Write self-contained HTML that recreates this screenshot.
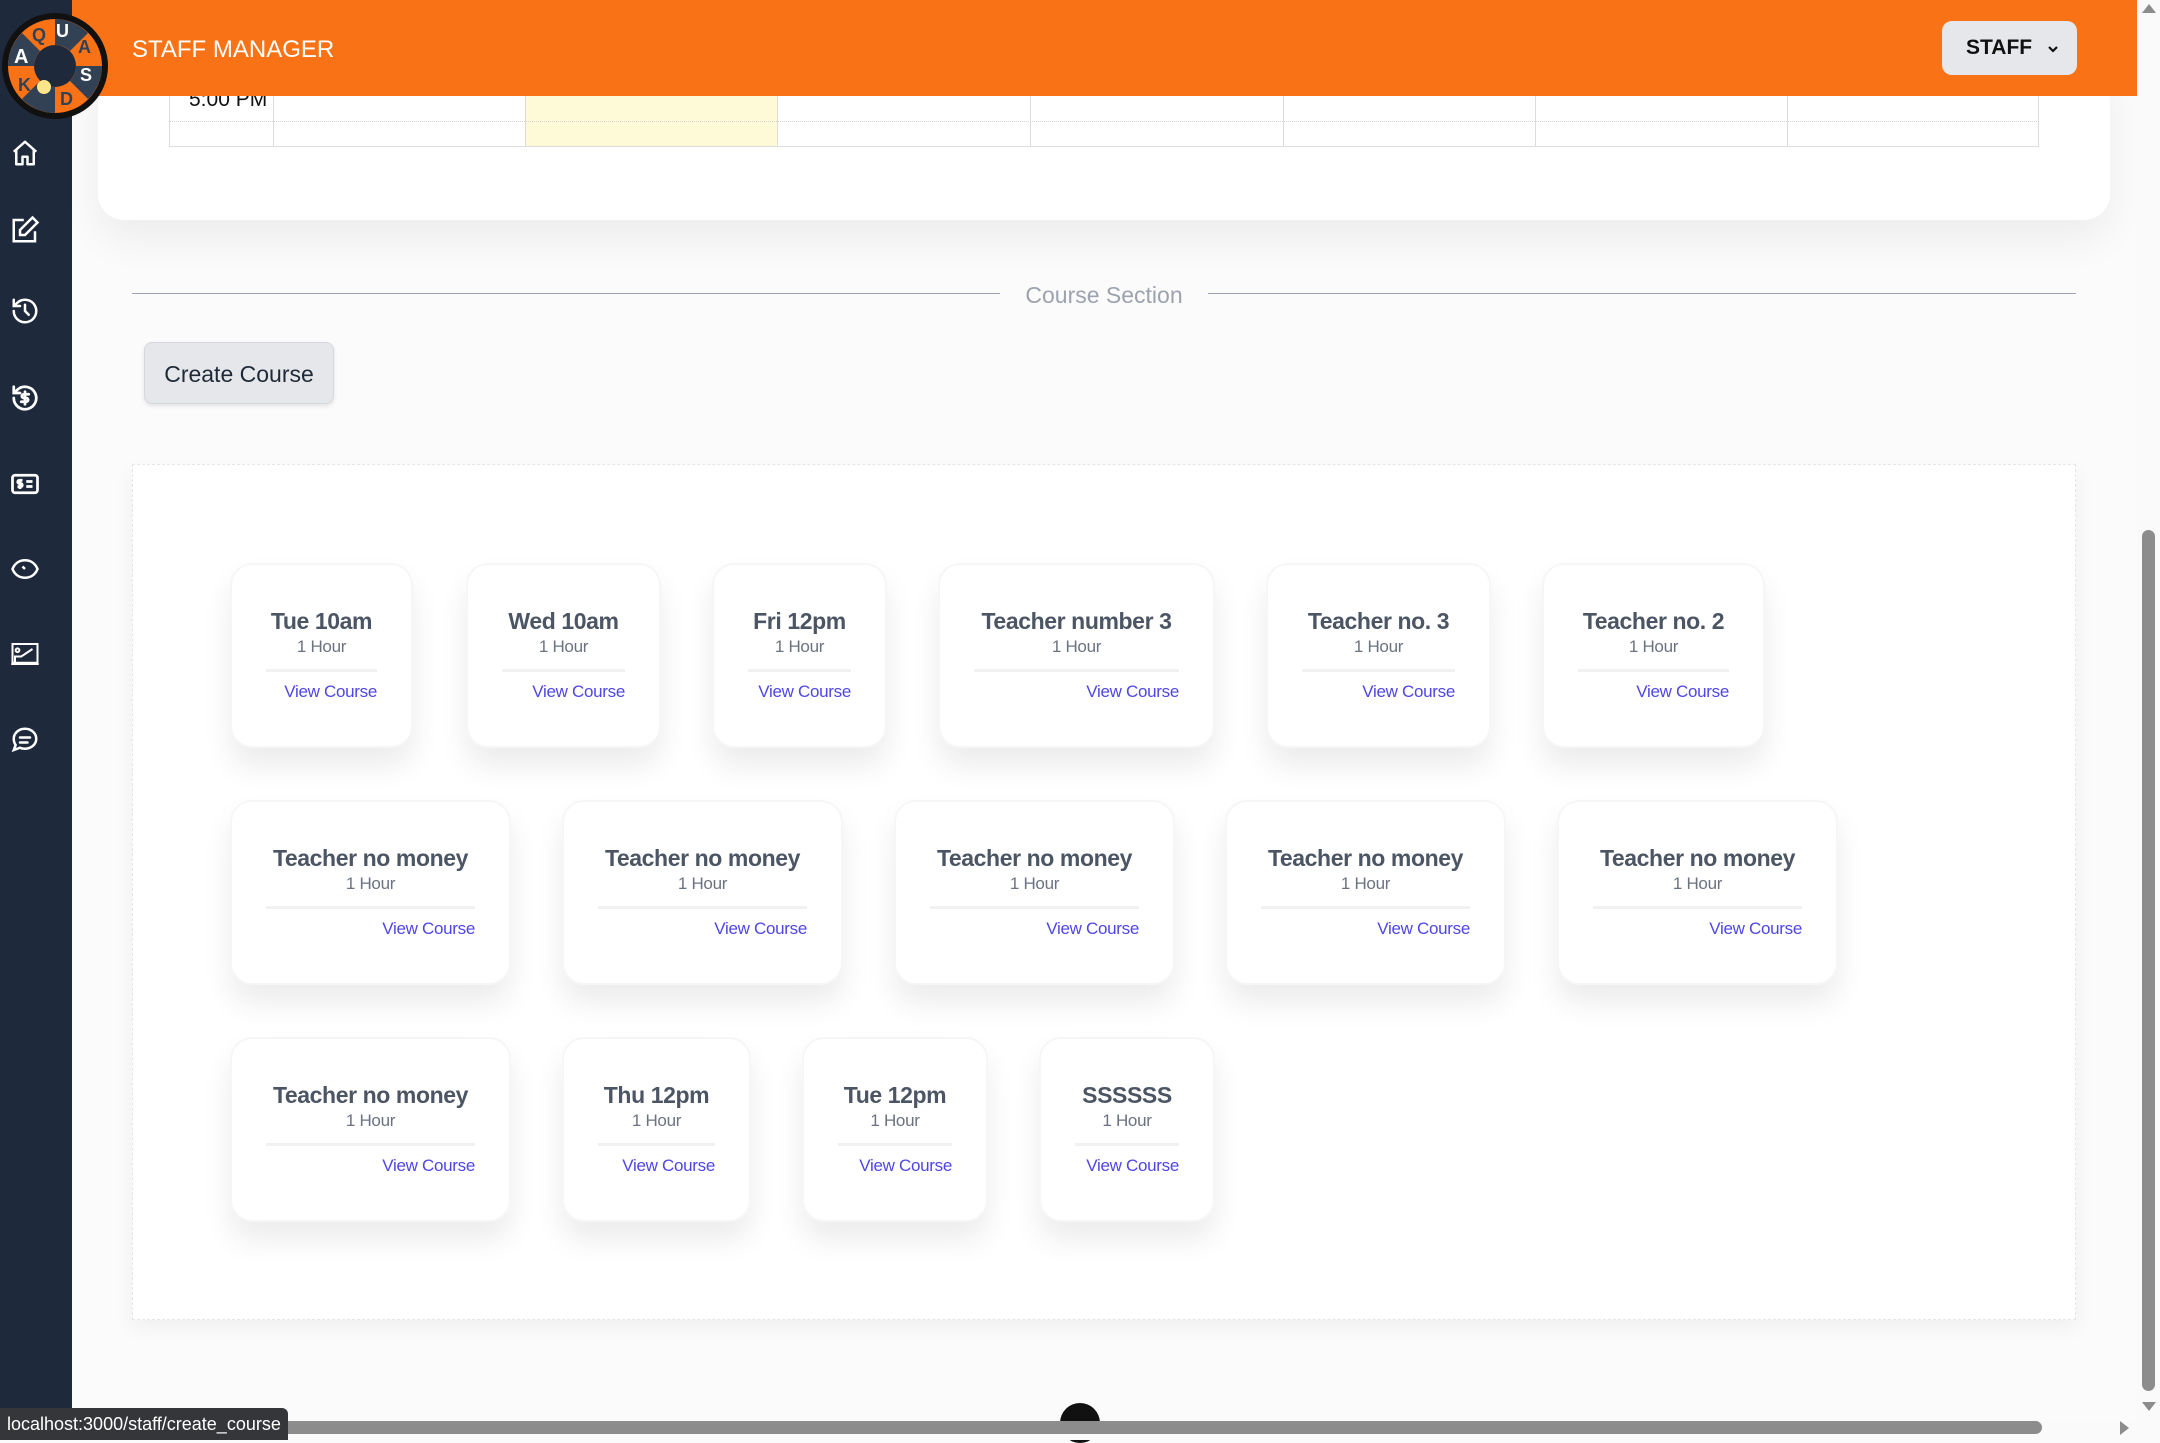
<!DOCTYPE html>
<html><head><meta charset="utf-8"><style>
*{box-sizing:border-box;margin:0;padding:0}
body{width:2160px;height:1440px;overflow:hidden;background:#fbfbfb;font-family:"Liberation Sans",sans-serif;position:relative}
.abs{position:absolute}
.side{left:0;top:0;width:72px;height:1440px;background:#1e293b}
.hdr{left:72px;top:0;width:2065px;height:96px;background:#f97316}
.card{position:absolute;background:#fff;border-radius:22px;box-shadow:0 18px 30px rgba(0,0,0,.08);border:2px solid #f6f6f6;height:185px}
.card .in{position:absolute;left:34px;right:34px;top:42px;white-space:nowrap}
.card .t{text-align:center;font-weight:bold;font-size:23px;color:#4b5563;line-height:28px;letter-spacing:-0.4px}
.card .h{text-align:center;font-size:17px;color:#6b7280;line-height:24px;letter-spacing:-0.3px}
.card .l{height:3px;background:#f1f1f1;margin-top:10px}
.card .v{text-align:right;font-size:17px;color:#4f46e5;margin-top:10px;letter-spacing:-0.3px}
.ic{position:absolute;left:10px;width:30px;height:30px}
</style></head><body>
<div class="abs side"></div>
<svg class="ic" style="top:138px" viewBox="0 0 24 24" fill="none" stroke="#fff" stroke-width="2" stroke-linejoin="round"><path d="M3 11l9-8 9 8M5 9v12h5v-6h4v6h5V9"/></svg>
<svg class="ic" style="top:215px" viewBox="0 0 24 24" fill="none" stroke="#fff" stroke-width="2"><path d="M11 4H3v17h17v-8"/><path d="M18 2l4 4-10 10H8v-4z"/></svg>
<svg class="ic" style="top:296px" viewBox="0 0 24 24" fill="none" stroke="#fff" stroke-width="2" stroke-linecap="round"><path d="M3 12a9 9 0 1 0 3-6.7L3 8M3 3v5h5M12 7v5l3 3"/></svg>
<svg class="ic" style="top:383px" viewBox="0 0 24 24" fill="none" stroke="#fff" stroke-width="2.2" stroke-linecap="round"><path d="M3 12a9 9 0 1 0 3-6.7L3 8M3 3v5h5"/><path d="M15 9h-4a1.5 1.5 0 0 0 0 3h2a1.5 1.5 0 0 1 0 3H9M12 7v10"/></svg>
<svg class="ic" style="top:469px" viewBox="0 0 24 24" fill="none" stroke="#fff" stroke-width="2.2"><rect x="2" y="5" width="20" height="14" rx="2"/><path d="M10 9H7.5a1.3 1.3 0 0 0 0 2.6h1a1.3 1.3 0 0 1 0 2.6H6M8 8v8M13 10h5M13 14h5"/></svg>
<svg class="ic" style="top:554px" viewBox="0 0 24 24" fill="none" stroke="#fff" stroke-width="2"><path d="M2 12c2-5 6-7 10-7s8 2 10 7c-2 5-6 7-10 7S4 17 2 12z"/><path d="M10 10l2 2M14 10h0"/></svg>
<svg class="ic" style="top:639px" viewBox="0 0 24 24" fill="none" stroke="#fff" stroke-width="1.6"><rect x="2" y="4" width="20" height="15"/><circle cx="6" cy="9" r="1.5"/><path d="M4 20v-6h5l9-6M1 20h22"/></svg>
<svg class="ic" style="top:725px" viewBox="0 0 24 24" fill="none" stroke="#fff" stroke-width="2" stroke-linecap="round"><path d="M12 3c5 0 9 3.5 9 8s-4 8-9 8c-1.5 0-3-.3-4-.8L3 20l1.5-4C3.5 14.6 3 13 3 11c0-4.5 4-8 9-8zM8 10h8M8 14h6"/></svg>

<div class="abs" style="left:98px;top:60px;width:2012px;height:160px;background:#fff;border-radius:0 0 26px 26px;box-shadow:0 20px 40px rgba(0,0,0,.06)"></div>
<div class="abs" style="left:169px;top:90px;width:1870px;height:57px;border:1px solid #dcdcdc;border-top:none"></div>
<div class="abs" style="left:525px;top:90px;width:252px;height:56px;background:#fef9d7"></div>
<div class="abs" style="left:169px;top:121px;width:1870px;border-top:1px dotted #d4d4d4"></div>
<div class="abs" style="left:273px;top:90px;height:57px;border-left:1px solid #dcdcdc"></div>
<div class="abs" style="left:525px;top:90px;height:57px;border-left:1px solid #dcdcdc"></div>
<div class="abs" style="left:777px;top:90px;height:57px;border-left:1px solid #dcdcdc"></div>
<div class="abs" style="left:1030px;top:90px;height:57px;border-left:1px solid #dcdcdc"></div>
<div class="abs" style="left:1283px;top:90px;height:57px;border-left:1px solid #dcdcdc"></div>
<div class="abs" style="left:1535px;top:90px;height:57px;border-left:1px solid #dcdcdc"></div>
<div class="abs" style="left:1787px;top:90px;height:57px;border-left:1px solid #dcdcdc"></div>
<div class="abs" style="left:189px;top:88px;font-size:21px;color:#111">5:00 PM</div>

<div class="abs hdr"></div>
<div class="abs" style="left:132px;top:36px;font-size:24px;color:#fff">STAFF MANAGER</div>
<div class="abs" style="left:1942px;top:21px;width:135px;height:54px;background:#e5e7eb;border-radius:10px;font-size:21px;font-weight:bold;color:#111;line-height:54px;padding-left:24px">STAFF <svg width="14" height="10" viewBox="0 0 14 10" style="margin-left:8px"><path d="M3 3l4 4 4-4" stroke="#111" stroke-width="2.2" fill="none"/></svg></div>

<svg class="abs" style="left:0;top:11px" width="110" height="110" viewBox="0 0 110 110">
<circle cx="55" cy="55" r="53" fill="#111"/>
<circle cx="55" cy="55" r="47" fill="#f97316"/>
<path d="M55 8A47 47 0 0 1 88 22L70 40A21 21 0 0 0 55 34z M102 55A47 47 0 0 1 88 88L70 70A21 21 0 0 0 76 55z M55 102A47 47 0 0 1 22 88L40 70A21 21 0 0 0 55 76z M8 55A47 47 0 0 1 22 22L40 40A21 21 0 0 0 34 55z" fill="#334155"/>
<circle cx="55" cy="55" r="21" fill="#1e293b"/>
<text x="14" y="52" font-size="20" font-weight="bold" fill="#fff">A</text>
<text x="32" y="30" font-size="18" font-weight="bold" fill="#334155">Q</text>
<text x="56" y="26" font-size="18" font-weight="bold" fill="#fff">U</text>
<text x="78" y="42" font-size="18" font-weight="bold" fill="#334155">A</text>
<text x="80" y="70" font-size="18" font-weight="bold" fill="#fff">S</text>
<text x="60" y="94" font-size="18" font-weight="bold" fill="#334155">D</text>
<text x="18" y="80" font-size="18" font-weight="bold" fill="#334155">K</text>
<circle cx="44" cy="76" r="7" fill="#fde68a"/>
</svg>

<div class="abs" style="left:132px;top:293px;width:868px;border-top:1px solid #9ca3af"></div>
<div class="abs" style="left:1208px;top:293px;width:868px;border-top:1px solid #9ca3af"></div>
<div class="abs" style="left:1000px;top:282px;width:208px;text-align:center;font-size:23px;color:#9ca3af">Course Section</div>

<div class="abs" style="left:144px;top:342px;width:190px;height:62px;background:#e5e7eb;border:1px solid #d6d8dc;border-radius:8px;box-shadow:0 2px 4px rgba(0,0,0,.1);font-size:23px;color:#1f2937;text-align:center;line-height:62px">Create Course</div>

<div class="abs" style="left:132px;top:464px;width:1944px;height:856px;background:#fff;border:1px dashed #e6e6e6;box-shadow:0 8px 20px rgba(0,0,0,.05)"></div>

<div class="card" style="left:230px;top:563px;width:183px"><div class="in"><div class="t">Tue 10am</div><div class="h">1 Hour</div><div class="l"></div><div class="v">View Course</div></div></div>
<div class="card" style="left:466px;top:563px;width:195px"><div class="in"><div class="t">Wed 10am</div><div class="h">1 Hour</div><div class="l"></div><div class="v">View Course</div></div></div>
<div class="card" style="left:712px;top:563px;width:175px"><div class="in"><div class="t">Fri 12pm</div><div class="h">1 Hour</div><div class="l"></div><div class="v">View Course</div></div></div>
<div class="card" style="left:938px;top:563px;width:277px"><div class="in"><div class="t">Teacher number 3</div><div class="h">1 Hour</div><div class="l"></div><div class="v">View Course</div></div></div>
<div class="card" style="left:1266px;top:563px;width:225px"><div class="in"><div class="t">Teacher no. 3</div><div class="h">1 Hour</div><div class="l"></div><div class="v">View Course</div></div></div>
<div class="card" style="left:1542px;top:563px;width:223px"><div class="in"><div class="t">Teacher no. 2</div><div class="h">1 Hour</div><div class="l"></div><div class="v">View Course</div></div></div>

<div class="card" style="left:230px;top:800px;width:281px"><div class="in"><div class="t">Teacher no money</div><div class="h">1 Hour</div><div class="l"></div><div class="v">View Course</div></div></div>
<div class="card" style="left:562px;top:800px;width:281px"><div class="in"><div class="t">Teacher no money</div><div class="h">1 Hour</div><div class="l"></div><div class="v">View Course</div></div></div>
<div class="card" style="left:894px;top:800px;width:281px"><div class="in"><div class="t">Teacher no money</div><div class="h">1 Hour</div><div class="l"></div><div class="v">View Course</div></div></div>
<div class="card" style="left:1225px;top:800px;width:281px"><div class="in"><div class="t">Teacher no money</div><div class="h">1 Hour</div><div class="l"></div><div class="v">View Course</div></div></div>
<div class="card" style="left:1557px;top:800px;width:281px"><div class="in"><div class="t">Teacher no money</div><div class="h">1 Hour</div><div class="l"></div><div class="v">View Course</div></div></div>

<div class="card" style="left:230px;top:1037px;width:281px"><div class="in"><div class="t">Teacher no money</div><div class="h">1 Hour</div><div class="l"></div><div class="v">View Course</div></div></div>
<div class="card" style="left:562px;top:1037px;width:189px"><div class="in"><div class="t">Thu 12pm</div><div class="h">1 Hour</div><div class="l"></div><div class="v">View Course</div></div></div>
<div class="card" style="left:802px;top:1037px;width:186px"><div class="in"><div class="t">Tue 12pm</div><div class="h">1 Hour</div><div class="l"></div><div class="v">View Course</div></div></div>
<div class="card" style="left:1039px;top:1037px;width:176px"><div class="in"><div class="t">SSSSSS</div><div class="h">1 Hour</div><div class="l"></div><div class="v">View Course</div></div></div>

<div class="abs" style="left:2137px;top:0;width:23px;height:1440px;background:#fafafa"></div>
<div class="abs" style="left:2142px;top:530px;width:13px;height:861px;background:#8c8c8c;border-radius:7px"></div>
<div class="abs" style="left:2142px;top:4px;width:0;height:0;border-left:7px solid transparent;border-right:7px solid transparent;border-bottom:9px solid #8c8c8c"></div>
<div class="abs" style="left:2142px;top:1402px;width:0;height:0;border-left:7px solid transparent;border-right:7px solid transparent;border-top:9px solid #8c8c8c"></div>
<div class="abs" style="left:1060px;top:1403px;width:40px;height:40px;border-radius:50%;background:#111"></div>
<div class="abs" style="left:0;top:1422px;width:2137px;height:18px;background:#fafafa"></div>
<div class="abs" style="left:280px;top:1421px;width:1762px;height:13px;background:#8c8c8c;border-radius:7px"></div>
<div class="abs" style="left:2120px;top:1421px;width:0;height:0;border-top:7px solid transparent;border-bottom:7px solid transparent;border-left:9px solid #8c8c8c"></div>
<div class="abs" style="left:0;top:1408px;width:288px;height:32px;background:#35363a;color:#fff;font-size:18px;line-height:32px;padding-left:7px;border-radius:0 6px 0 0">localhost:3000/staff/create_course</div>
</body></html>
